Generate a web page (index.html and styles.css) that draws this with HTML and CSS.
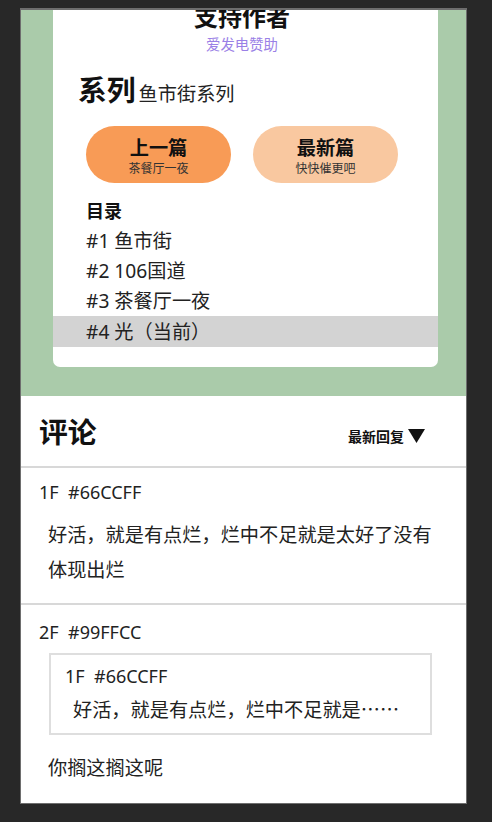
FILE: index.html
```html
<!DOCTYPE html>
<html lang="zh-CN">
<head>
<meta charset="utf-8">
<title>光</title>
<link rel="stylesheet" href="styles.css">
</head>
<body>
<div class="frame">
  <section class="top">
    <div class="card">
      <div class="support">
        <div class="support-title">支持作者</div>
        <div class="support-link">爱发电赞助</div>
      </div>
      <div class="series">
        <span class="series-label">系列</span>
        <span class="series-name">鱼市街系列</span>
      </div>
      <div class="nav">
        <div class="btn btn-prev">
          <span class="btn-title">上一篇</span>
          <span class="btn-sub">茶餐厅一夜</span>
        </div>
        <div class="btn btn-next">
          <span class="btn-title">最新篇</span>
          <span class="btn-sub">快快催更吧</span>
        </div>
      </div>
      <div class="toc-title">目录</div>
      <ul class="toc">
        <li class="toc-item">#1 鱼市街</li>
        <li class="toc-item">#2 106国道</li>
        <li class="toc-item">#3 茶餐厅一夜</li>
        <li class="toc-item toc-current">#4 光（当前）</li>
      </ul>
    </div>
  </section>
  <section class="comments">
    <div class="comments-head">
      <h2 class="comments-title">评论</h2>
      <div class="sort">最新回复
        <svg class="sort-icon" width="17" height="14" viewBox="0 0 17 14"><polygon points="0,0 17,0 8.5,14" fill="#111"/></svg>
      </div>
    </div>
    <div class="comment c1">
      <div class="floor">1F&nbsp;&nbsp;#66CCFF</div>
      <div class="comment-text">好活，就是有点烂，烂中不足就是太好了没有体现出烂</div>
    </div>
    <div class="comment c2">
      <div class="floor">2F&nbsp;&nbsp;#99FFCC</div>
      <div class="quote">
        <div class="floor">1F&nbsp;&nbsp;#66CCFF</div>
        <div class="comment-text">好活，就是有点烂，烂中不足就是<span class="ell">……</span></div>
      </div>
      <div class="comment-text reply">你搁这搁这呢</div>
    </div>
  </section>
</div>
</body>
</html>
```

FILE: styles.css
```css
* { box-sizing: border-box; }
html, body { margin: 0; padding: 0; }
body {
  background: #282828;
  font-family: "Noto Sans", "Noto Sans CJK SC", sans-serif;
  color: #222;
}
.frame {
  margin: 8px 0 0 20px;
  width: 447px;
  border: 1px solid #6e6e6e;
  border-top-width: 2px;
  background: #fff;
  overflow: hidden;
}
.top {
  background: #aacbaa;
  padding: 0 0 29px 32px;
  overflow: hidden;
}
.card {
  margin-top: -9px;
  width: 385px;
  background: #fff;
  border-radius: 7px;
  padding-bottom: 20px;
}
.support { text-align: center; padding-right: 7px; }
.support-title {
  font-family: "Noto Sans CJK SC", sans-serif;
  font-weight: 700;
  font-size: 24px;
  line-height: 30px;
  color: #111;
}
.support-link {
  font-family: "Noto Sans CJK SC", sans-serif;
  font-size: 14.4px;
  line-height: 26px;
  color: #9a80e6;
}
.series {
  margin-top: 12px;
  padding-left: 25px;
  height: 40px;
  display: flex;
  align-items: baseline;
  gap: 3px;
}
.series-label {
  font-family: "Noto Sans CJK SC", sans-serif;
  font-weight: 700;
  font-size: 28.8px;
  line-height: 40px;
  color: #111;
}
.series-name {
  font-family: "Noto Sans CJK SC", sans-serif;
  font-size: 19.2px;
  line-height: 40px;
}
.nav {
  margin-top: 17px;
  padding-left: 33px;
  display: flex;
  gap: 22px;
}
.btn {
  width: 145px;
  height: 57px;
  border-radius: 29px;
  display: flex;
  flex-direction: column;
  align-items: center;
  justify-content: center;
  font-family: "Noto Sans CJK SC", sans-serif;
}
.btn-prev { background: #f89b56; }
.btn-next { background: #f9c8a0; }
.btn-title {
  font-weight: 700;
  font-size: 19.2px;
  line-height: 26px;
  color: #111;
}
.btn-sub {
  font-size: 12px;
  line-height: 16px;
  color: #333;
}
.toc-title {
  margin-top: 15px;
  padding-left: 33px;
  font-family: "Noto Sans CJK SC", sans-serif;
  font-weight: 700;
  font-size: 18px;
  line-height: 24px;
  color: #111;
}
.toc {
  list-style: none;
  margin: 3px 0 0;
  padding: 0;
}
.toc-item {
  padding-left: 33px;
  font-size: 19.2px;
  line-height: 30px;
}
.toc-item:first-child { line-height: 31px; }
.toc-current { background: #d3d3d3; line-height: 31px; }
.comments { background: #fff; }
.comments-head {
  height: 72px;
  border-bottom: 2px solid #d8d8d8;
  display: flex;
  align-items: center;
  justify-content: space-between;
  padding: 0 41px 0 18px;
}
.comments-title {
  margin: 0;
  font-family: "Noto Sans CJK SC", sans-serif;
  font-weight: 700;
  font-size: 28.8px;
  line-height: 40px;
  color: #111;
}
.sort {
  margin-top: 10px;
  display: flex;
  align-items: center;
  gap: 4px;
  font-family: "Noto Sans CJK SC", sans-serif;
  font-weight: 700;
  font-size: 14px;
  color: #111;
}
.comment {
  padding: 9px 0 16px 18px;
}
.c1 { border-bottom: 2px solid #d8d8d8; }
.c2 { padding-top: 12px; padding-bottom: 18px; }
.floor {
  font-size: 18px;
  line-height: 30px;
}
.comment-text {
  margin-top: 10px;
  padding-left: 9px;
  width: 410px;
  font-size: 19.2px;
  line-height: 35px;
}
.quote {
  margin: 6px 34px 0 10px;
  border: 2px solid #dedede;
  padding: 6px 0 6px 14px;
}
.quote .comment-text { margin-top: 1px; padding-left: 8px; width: auto; }
.ell {
  font-family: "Noto Sans CJK SC", sans-serif;
  font-feature-settings: "fwid" 1;
}
.reply { margin-top: 15px; }
```
